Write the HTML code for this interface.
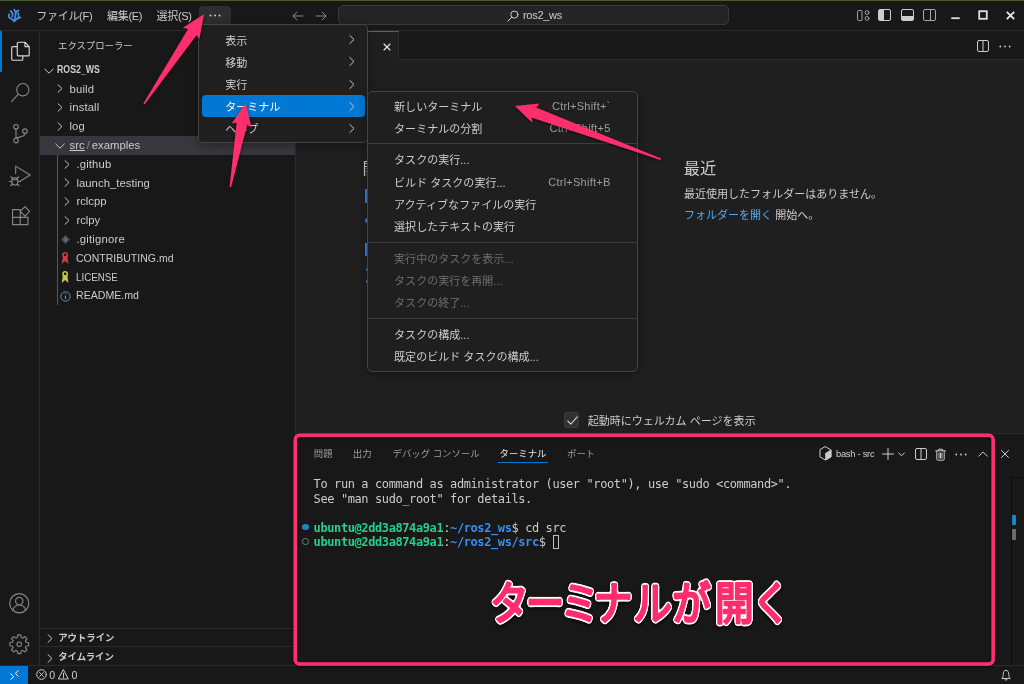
<!DOCTYPE html>
<html lang="ja">
<head>
<meta charset="utf-8">
<title>ros2_ws</title>
<style>
*{box-sizing:border-box;margin:0;padding:0}
html,body{width:1024px;height:684px;overflow:hidden;background:#181818}
body{position:relative;font-family:"Liberation Sans","Noto Sans CJK JP",sans-serif;font-size:11px;color:#cccccc;-webkit-font-smoothing:antialiased}
.abs{position:absolute}
#topline{left:0;top:0;width:1024px;height:1.200px;background:#4b5a2a}
#titlebar{left:0;top:1px;width:1024px;height:30px;background:#181818;border-bottom:1px solid #2b2b2b}
#activity{left:0;top:31px;width:40px;height:635px;background:#181818;border-right:1px solid #2b2b2b}
#sidebar{left:40px;top:31px;width:256px;height:635px;background:#181818;border-right:1px solid #2b2b2b}
#tabs{left:296px;top:31px;width:728px;height:29px;background:#181818;border-bottom:1px solid #2b2b2b}
#editor{left:296px;top:60px;width:728px;height:374px;background:#1f1f1f}
#panel{left:296px;top:433px;width:728px;height:233px;background:#181818;border-top:1px solid #2b2b2b}
#status{left:0;top:665px;width:1024px;height:19px;background:#181818;border-top:1px solid #2b2b2b}
.menu{background:#1f1f1f;border:1px solid #454545;border-radius:5px;box-shadow:0 2px 8px rgba(0,0,0,.36)}
.t{position:absolute;white-space:nowrap;line-height:1}

.mi{position:absolute;top:.8px;height:29px;line-height:29px;font-size:11px;letter-spacing:-.3px;color:#cccccc;white-space:nowrap}
svg{position:absolute;overflow:visible}
.ic{fill:none;stroke:#cccccc;stroke-width:1;stroke-linecap:round;stroke-linejoin:round}

.ai{fill:none;stroke:#868686;stroke-width:1.35;stroke-linecap:round;stroke-linejoin:round}
.row{position:absolute;left:0;width:255px;height:18.800px;line-height:18.800px;font-size:11.300px;color:#cccccc;white-space:nowrap}
.row span.l{position:absolute;top:0}
.chev{fill:none;stroke:#c5c5c5;stroke-width:1;stroke-linecap:round;stroke-linejoin:round}

.cj{font-family:"Liberation Sans","Noto Sans CJK JP",sans-serif}
.ptab{position:absolute;top:13.500px;font-size:9.400px;line-height:12px;color:#9d9d9d;white-space:nowrap}
.term{position:absolute;left:17.600px;font-family:"DejaVu Sans Mono","Liberation Mono",monospace;font-size:11.950px;line-height:14.500px;white-space:pre;color:#cccccc;letter-spacing:-.364px}
.term b{font-weight:bold}

.mrow{position:absolute;left:0;height:22.100px;line-height:22.100px;font-size:11.040px;color:#cccccc;white-space:nowrap}
.mrow .lab{position:absolute;left:25.800px;top:.7px}
.mrow .key{position:absolute;right:25.800px;top:0;color:#9d9d9d;font-size:11.040px;letter-spacing:.23px}
.msep{position:absolute;left:0;height:1px;background:#3c3c3c}
.dis{color:#6d6d6d !important}
</style>
</head>
<body><div id="wrap" style="position:absolute;left:0;top:0;width:1024px;height:684px;will-change:transform">
<div id="topline" class="abs"></div>
<div id="titlebar" class="abs">
<svg style="left:7px;top:7px" width="15" height="15" viewBox="0 0 15 15"><g fill="none" stroke="#4a90e2" stroke-width="1.7" stroke-linecap="round" stroke-linejoin="round"><path d="M2.2 6.2c-1 1.6-.4 3.6 1.6 4.4 1.4.6 2.6 1 3.4 2.8"/><path d="M3.6 3c1.6 1.2 2.6 3.2 1.6 5.6"/><path d="M7.2 1.6c1.4 1.4 1.8 3 1.4 5.2-.4 2.2-.8 3.600-1.400 6.400"/><path d="M11.600 2.400c-1.600.4-2.400 1.400-2.800 2.600"/><path d="M11.200 5.200c.6 1.600.6 3 .2 4.400"/><path d="M13.400 9.400c-2.200.4-4.200 1.400-6.200 3.800"/></g></svg>
<div class="mi" style="left:36.300px">ファイル(F)</div>
<div class="mi" style="left:107px">編集(E)</div>
<div class="mi" style="left:156.500px">選択(S)</div>
<div class="abs" style="left:199px;top:5px;width:32px;height:19px;border-radius:4px;background:#2d2e2e"></div>
<svg style="left:209px;top:13px" width="12" height="3" viewBox="0 0 12 3"><circle cx="1.500" cy="1.500" r="1" fill="#cccccc"/><circle cx="6" cy="1.500" r="1" fill="#cccccc"/><circle cx="10.500" cy="1.500" r="1" fill="#cccccc"/></svg>
<svg style="left:292px;top:10px" width="12" height="10" viewBox="0 0 12 10"><path class="ic" stroke="#8a8a8a" style="stroke:#8a8a8a" d="M11 5H1M5 1L1 5l4 4"/></svg>
<svg style="left:315px;top:10px" width="12" height="10" viewBox="0 0 12 10"><path class="ic" style="stroke:#8a8a8a" d="M1 5h10M7 1l4 4-4 4"/></svg>
<div class="abs" style="left:338px;top:4px;width:391px;height:20px;border-radius:5px;background:#242424;border:1px solid #3a3a3a"></div>
<svg style="left:507px;top:9px" width="12" height="12" viewBox="0 0 12 12"><circle class="ic" cx="7.400" cy="4.600" r="3.600"/><path class="ic" d="M4.800 7.200L.8 11.200"/></svg>
<div class="mi" style="left:523px;top:0">ros2_ws</div>
<!-- layout icons -->
<svg style="left:857px;top:9px" width="13" height="11" viewBox="0 0 13 11"><rect class="ic" style="stroke:#a0a0a0" x=".5" y=".5" width="4.500" height="10" rx="1"/><circle class="ic" style="stroke:#a0a0a0" cx="10" cy="2.600" r="1.900"/><circle class="ic" style="stroke:#a0a0a0" cx="10" cy="8.400" r="1.900"/></svg>
<svg style="left:878px;top:8px" width="13" height="12" viewBox="0 0 13 12"><rect class="ic" x=".5" y=".5" width="12" height="11" rx="1.500"/><path d="M1 1h5v10H1z" fill="#cccccc"/></svg>
<svg style="left:901px;top:8px" width="13" height="12" viewBox="0 0 13 12"><rect class="ic" x=".5" y=".5" width="12" height="11" rx="1.500"/><path d="M1 7h11v4H1z" fill="#cccccc"/></svg>
<svg style="left:923px;top:8px" width="13" height="12" viewBox="0 0 13 12"><rect class="ic" style="stroke:#a8a8a8" x=".5" y=".5" width="12" height="11" rx="1.500"/><path class="ic" style="stroke:#a8a8a8" d="M7.500 .5v11"/></svg>
<svg style="left:951px;top:16px" width="9" height="3" viewBox="0 0 9 3"><path d="M.3 1.200h8.400" stroke="#e0e0e0" stroke-width="1.800" fill="none"/></svg>
<svg style="left:978px;top:9px" width="10" height="10" viewBox="0 0 10 10"><rect x="1.200" y="1.200" width="7.600" height="7.600" stroke="#e0e0e0" stroke-width="1.800" fill="none"/></svg>
<svg style="left:1006px;top:10px" width="9" height="9" viewBox="0 0 9 9"><path d="M.8 .8l7.400 7.400M8.200 .8L.8 8.200" stroke="#e8e8e8" stroke-width="1.800" fill="none"/></svg>
</div>
<div id="activity" class="abs">
<div class="abs" style="left:0;top:0;width:1.500px;height:41px;background:#0078d4"></div>
<!-- files -->
<svg style="left:9.500px;top:9.700px" width="20.500" height="20.500" viewBox="0 0 24 24"><path class="ai" style="stroke:#d7d7d7" d="M17.500 1.500H10a1.500 1.500 0 0 0-1.500 1.500v13a1.500 1.500 0 0 0 1.500 1.500h11a1.500 1.500 0 0 0 1.500-1.500V6.500zM17.500 1.500v5h5M8.500 6.500H3.500A1.500 1.500 0 0 0 2 8v13a1.500 1.500 0 0 0 1.500 1.500h10A1.500 1.500 0 0 0 15 21v-3.500"/></svg>
<!-- search -->
<svg style="left:9.500px;top:51px" width="20.500" height="20.500" viewBox="0 0 24 24"><circle class="ai" cx="15" cy="9" r="7.200"/><path class="ai" d="M9.800 14.200L1.800 23"/></svg>
<!-- scm -->
<svg style="left:9.500px;top:92px" width="20.500" height="20.500" viewBox="0 0 24 24"><circle class="ai" cx="7" cy="4.500" r="2.700"/><circle class="ai" cx="7" cy="20.500" r="2.700"/><circle class="ai" cx="17.500" cy="9.500" r="2.700"/><path class="ai" d="M7 7.200v10.600M17.500 12.200c0 4-5 3.300-10.500 5.600"/></svg>
<!-- debug -->
<svg style="left:8px;top:133px" width="23" height="23" viewBox="0 0 27 27"><path class="ai" d="M9 11V2.500l17 10.500-11.500 7"/><ellipse class="ai" cx="8" cy="20.500" rx="3.600" ry="4.200"/><path class="ai" d="M5.500 17l-2-2M10.500 17l2-2M4.400 20.500H1.500M11.600 20.500h3M5.200 23.500l-2.200 2M10.800 23.500l2.200 2M5 18.500h6"/></svg>
<!-- extensions -->
<svg style="left:9.500px;top:174px" width="20.500" height="20.500" viewBox="0 0 24 24"><path class="ai" d="M3 5.500h9v9H3zM3 14.500h9v8.500H3zM12 14.500h9V23h-9zM17.500 2l5.500 5.500-5.500 5.500-5.500-5.500z"/></svg>
<!-- account -->
<svg style="left:9.200px;top:561.800px" width="20.500" height="20.500" viewBox="0 0 24 24"><circle class="ai" cx="12" cy="12" r="11.200"/><circle class="ai" cx="12" cy="9.500" r="4.300"/><path class="ai" d="M4.500 20c1-4 4-6 7.500-6s6.500 2 7.500 6"/></svg>
<!-- gear -->
<svg style="left:9.200px;top:602.800px" width="20.500" height="20.500" viewBox="0 0 24 24"><circle class="ai" cx="12" cy="12" r="2.600"/><path class="ai" d="M10.300 1h3.400l.6 3.100 1.700.7 2.600-1.800 2.400 2.400-1.800 2.600.7 1.700 3.100.6v3.400l-3.100.6-.7 1.700 1.800 2.600-2.400 2.400-2.600-1.800-1.700.7-.6 3.100h-3.400l-.6-3.100-1.700-.7-2.600 1.800-2.400-2.400 1.800-2.600-.7-1.700L1 13.700v-3.400l3.100-.6.700-1.700L3 5.400 5.400 3 8 4.800l1.700-.7z"/></svg>
</div>
<div id="sidebar" class="abs">
<div class="t" style="left:18px;top:9.500px;font-size:9.400px;color:#cccccc">エクスプローラー</div>
<div class="row" style="top:29.75px;font-weight:bold;font-size:10.400px"><svg style="left:4.300px;top:7px" width="10" height="6" viewBox="0 0 10 6"><path class="chev" d="M.7 1l4.300 4.200L9.300 1"/></svg><span class="l" style="left:17.400px;transform:scaleX(.845);transform-origin:0 50%">ROS2_WS</span></div>
<div class="row" style="top:48.55px"><svg style="left:17.100px;top:4.800px" width="6" height="9" viewBox="0 0 6 9"><path class="chev" d="M1 .7l4 3.800-4 3.800"/></svg><span class="l" style="left:29.600px;letter-spacing:.14px">build</span></div>
<div class="row" style="top:67.35px"><svg style="left:17.100px;top:4.800px" width="6" height="9" viewBox="0 0 6 9"><path class="chev" d="M1 .7l4 3.800-4 3.800"/></svg><span class="l" style="left:29.600px;letter-spacing:.13px">install</span></div>
<div class="row" style="top:86.15px"><svg style="left:17.100px;top:4.800px" width="6" height="9" viewBox="0 0 6 9"><path class="chev" d="M1 .7l4 3.800-4 3.800"/></svg><span class="l" style="left:29.600px">log</span></div>
<div class="row" style="top:104.95px;background:#37373d;width:255px"><svg style="left:15px;top:7px" width="10" height="6" viewBox="0 0 10 6"><path class="chev" d="M.7 1l4.300 4.200L9.300 1"/></svg><span class="l" style="left:29.600px"><span style="text-decoration:underline">src</span><span style="color:#8f8f8f;padding:0 2px">/</span>examples</span></div>
<div class="abs" style="left:17.400px;top:123.75px;width:1px;height:150.4px;background:#585858"></div>
<div class="row" style="top:123.75px"><svg style="left:23.600px;top:4.800px" width="6" height="9" viewBox="0 0 6 9"><path class="chev" d="M1 .7l4 3.800-4 3.800"/></svg><span class="l" style="left:36.400px;letter-spacing:.16px">.github</span></div>
<div class="row" style="top:142.55px"><svg style="left:23.600px;top:4.800px" width="6" height="9" viewBox="0 0 6 9"><path class="chev" d="M1 .7l4 3.800-4 3.800"/></svg><span class="l" style="left:36.400px;letter-spacing:.05px">launch_testing</span></div>
<div class="row" style="top:161.35px"><svg style="left:23.600px;top:4.800px" width="6" height="9" viewBox="0 0 6 9"><path class="chev" d="M1 .7l4 3.800-4 3.800"/></svg><span class="l" style="left:36.400px">rclcpp</span></div>
<div class="row" style="top:180.15px"><svg style="left:23.600px;top:4.800px" width="6" height="9" viewBox="0 0 6 9"><path class="chev" d="M1 .7l4 3.800-4 3.800"/></svg><span class="l" style="left:36.400px">rclpy</span></div>
<div class="row" style="top:198.95px"><svg style="left:20.500px;top:4.900px" width="9" height="9" viewBox="0 0 9 9"><path d="M4.500 0L9 4.500 4.500 9 0 4.500z" fill="#41535b"/><path d="M3.200 2.600l2.600 2.600M4.500 3.900v2.600" stroke="#7d949d" stroke-width=".9" fill="none"/></svg><span class="l" style="left:36.400px;letter-spacing:.2px">.gitignore</span></div>
<div class="row" style="top:217.75px"><svg style="left:20.900px;top:3.300px" width="8.200" height="12.600" viewBox="0 0 7 11"><circle cx="3.500" cy="2.600" r="1.900" fill="none" stroke="#cc3e44" stroke-width="1.400"/><path d="M1.600 3.800L.6 10.500 3.500 7.800l2.900 2.700L5.400 3.800z" fill="#cc3e44"/></svg><span class="l" style="left:36.400px;transform:scaleX(.93);transform-origin:0 50%">CONTRIBUTING.md</span></div>
<div class="row" style="top:236.55px"><svg style="left:20.900px;top:3.300px" width="8.200" height="12.600" viewBox="0 0 7 11"><circle cx="3.500" cy="2.600" r="1.900" fill="none" stroke="#cbcb41" stroke-width="1.400"/><path d="M1.600 3.800L.6 10.500 3.500 7.800l2.900 2.700L5.400 3.800z" fill="#cbcb41"/></svg><span class="l" style="left:36.400px;transform:scaleX(.865);transform-origin:0 50%">LICENSE</span></div>
<div class="row" style="top:255.35px"><svg style="left:19.800px;top:4.200px" width="11" height="11" viewBox="0 0 11 11"><circle cx="5.500" cy="5.500" r="4.700" fill="none" stroke="#519aba" stroke-width="1"/><path d="M5.500 4.800v3.200" stroke="#519aba" stroke-width="1.200" fill="none"/><circle cx="5.500" cy="3.100" r=".7" fill="#519aba"/></svg><span class="l" style="left:36.400px;transform:scaleX(.9375);transform-origin:0 50%">README.md</span></div>
<div class="abs" style="left:0;top:597px;width:255px;height:1px;background:#2b2b2b"></div>
<div class="row" style="top:597.800px;font-weight:bold;font-size:9.400px"><svg style="left:6.5px;top:5.400px" width="6" height="9" viewBox="0 0 6 9"><path class="chev" d="M1 .7l4 3.800-4 3.800"/></svg><span class="l" style="left:18.200px">アウトライン</span></div>
<div class="abs" style="left:0;top:615.300px;width:255px;height:1px;background:#2b2b2b"></div>
<div class="row" style="top:617.300px;font-weight:bold;font-size:9.400px"><svg style="left:6.5px;top:5.400px" width="6" height="9" viewBox="0 0 6 9"><path class="chev" d="M1 .7l4 3.800-4 3.800"/></svg><span class="l" style="left:18.200px">タイムライン</span></div>
</div>
<div id="tabs" class="abs">
<div class="abs" style="left:0;top:0;width:103px;height:30px;background:#1f1f1f;border-top:1.500px solid #0078d4;border-right:1px solid #2b2b2b"></div>
<svg style="left:86.500px;top:11.500px" width="8" height="8" viewBox="0 0 8 8"><path d="M.7 .7l6.600 6.600M7.300 .7L.7 7.300" stroke="#e0e0e0" stroke-width="1.300" fill="none"/></svg>
<svg style="left:681px;top:9px" width="12" height="12" viewBox="0 0 12 12"><rect class="ic" x=".5" y=".5" width="11" height="11" rx="1.500"/><path class="ic" d="M6 .5v11"/></svg>
<svg style="left:703px;top:14px" width="12" height="3" viewBox="0 0 12 3"><circle cx="1.300" cy="1.500" r=".9" fill="#cccccc"/><circle cx="6" cy="1.500" r=".9" fill="#cccccc"/><circle cx="10.700" cy="1.500" r=".9" fill="#cccccc"/></svg>
</div>
<div id="editor" class="abs">
<div class="t" style="left:387.800px;top:100px;font-size:16.200px;color:#cccccc">最近</div>
<div class="t" style="left:387.900px;top:129.300px;font-size:11.040px;color:#cccccc">最近使用したフォルダーはありません。</div>
<div class="t" style="left:387.900px;top:150.200px;font-size:11.040px;color:#cccccc"><span style="color:#4daafc">フォルダーを開く</span> 開始へ。</div>
<div class="abs" style="left:268px;top:352.400px;width:15.400px;height:15.400px;border-radius:3px;background:#313131;border:1px solid #3c3c3c"></div>
<svg style="left:270.500px;top:355.500px" width="11" height="9" viewBox="0 0 11 9"><path class="ic" style="stroke-width:1.100" d="M.8 5l3 3.200L10.200 .8"/></svg>
<div class="t" style="left:291.700px;top:355.700px;font-size:11.040px;color:#cccccc">起動時にウェルカム ページを表示</div>
<!-- slivers of welcome page content visible left of the submenu -->
<div class="t" style="left:66.500px;top:100px;font-size:16.200px;color:#cccccc">開始</div>
<div class="abs" style="left:69.300px;top:128.500px;width:2.200px;height:14.500px;background:#3b82d6"></div>
<div class="abs" style="left:69.300px;top:157.700px;width:2.200px;height:5.300px;border-radius:2px 0 0 2px;background:#3b82d6"></div>
<div class="abs" style="left:69.300px;top:182.500px;width:2.200px;height:13.200px;background:#3b82d6"></div>
<div class="abs" style="left:69.500px;top:208.300px;width:2px;height:3px;border-radius:1.500px;background:#3b82d6"></div>
<div class="abs" style="left:69.500px;top:220px;width:2px;height:3px;border-radius:1.500px;background:#3b82d6"></div>
</div>
<div id="panel" class="abs">
<div class="ptab" style="left:17.800px">問題</div>
<div class="ptab" style="left:56.800px">出力</div>
<div class="ptab" style="left:96.600px">デバッグ コンソール</div>
<div class="ptab" style="left:203.500px;color:#e7e7e7">ターミナル</div>
<div class="abs" style="left:201.700px;top:28.300px;width:50.300px;height:1px;background:#0078d4"></div>
<div class="ptab" style="left:271px">ポート</div>
<div class="term" style="top:43.400px">To run a command as administrator (user "root"), use "sudo &lt;command&gt;".
See "man sudo_root" for details.

<b style="color:#23d18b">ubuntu@2dd3a874a9a1</b>:<b style="color:#3b8eea">~/ros2_ws</b>$ cd src
<b style="color:#23d18b">ubuntu@2dd3a874a9a1</b>:<b style="color:#3b8eea">~/ros2_ws/src</b>$ </div>
<div class="abs" style="left:6.100px;top:89.500px;width:6.800px;height:6.800px;border-radius:3.400px;background:#1a85c4"></div>
<div class="abs" style="left:6.300px;top:104.200px;width:6.400px;height:6.400px;border-radius:3.200px;border:1.200px solid #7a7a7a"></div>
<div class="abs" style="left:256.500px;top:100.600px;width:6.900px;height:14px;border:1px solid #c0c0c0"></div>
<!-- panel toolbar -->
<svg style="left:522.500px;top:12.1px" width="13" height="15" viewBox="0 0 13 15"><path class="ic" d="M6.500 .8l5.500 3.100v7l-5.500 3.100L1 10.900v-7z"/><path d="M6.500 7.200L12 3.900v7l-5.500 3.100z" fill="#cccccc" stroke="#cccccc" stroke-width=".6" stroke-linejoin="round"/></svg>
<div class="t" style="left:540px;top:14.7px;font-size:9.400px;letter-spacing:-.28px;color:#cccccc">bash - src</div>
<svg style="left:586px;top:13.9px" width="12" height="12" viewBox="0 0 12 12"><path class="ic" d="M6 .5v11M.5 6h11"/></svg>
<svg style="left:601.500px;top:18.4px" width="7" height="5" viewBox="0 0 7 5"><path class="ic" d="M.6 .8l2.900 3 2.900-3"/></svg>
<svg style="left:618.600px;top:14.4px" width="12" height="12" viewBox="0 0 12 12"><rect class="ic" x=".5" y=".5" width="11" height="11" rx="1.500"/><path class="ic" d="M6 .5v11"/></svg>
<svg style="left:639px;top:13.9px" width="11" height="13" viewBox="0 0 11 13"><path class="ic" d="M.6 2.800h9.800M3.600 2.600V1.200h3.800v1.400M1.800 3v8.300c0 .5.400.9.900.9h5.600c.5 0 .9-.4.900-.9V3M4 5v5.200M5.500 5v5.200M7 5v5.200"/></svg>
<svg style="left:659px;top:18.9px" width="12" height="3" viewBox="0 0 12 3"><circle cx="1.300" cy="1.500" r=".9" fill="#cccccc"/><circle cx="6" cy="1.500" r=".9" fill="#cccccc"/><circle cx="10.700" cy="1.500" r=".9" fill="#cccccc"/></svg>
<svg style="left:681.500px;top:16.9px" width="10" height="6" viewBox="0 0 10 6"><path class="ic" d="M.7 5.200L5 .9l4.300 4.300"/></svg>
<svg style="left:704.800px;top:15.9px" width="8" height="8" viewBox="0 0 8 8"><path class="ic" d="M.5 .5l7 7M7.500 .5l-7 7"/></svg>
<!-- overview ruler -->
<div class="abs" style="left:715.200px;top:42.500px;width:13px;height:190px;border-left:1px solid #0c0c0c;border-top:1px solid #0c0c0c"></div>
<div class="abs" style="left:716.400px;top:80.700px;width:3.200px;height:10.200px;background:#1a85c4"></div>
<div class="abs" style="left:716.400px;top:95.200px;width:3.200px;height:10.500px;background:#6b6b6b"></div>
</div>
<div id="status" class="abs">
<div class="abs" style="left:0;top:0;width:28.200px;height:18px;background:#0078d4"></div>
<svg style="left:9.500px;top:4px" width="9" height="10" viewBox="0 0 9 10"><path d="M.8 3.800l2.800 2.800L.8 9.400M8.200 .6L5.400 3.400l2.800 2.800" stroke="#ffffff" stroke-width="1" fill="none" stroke-linecap="round" stroke-linejoin="round"/></svg>
<svg style="left:35.700px;top:3.400px" width="11" height="11" viewBox="0 0 11 11"><circle class="ic" cx="5.500" cy="5.500" r="4.800"/><path class="ic" d="M3.600 3.600l3.800 3.800M7.400 3.600L3.600 7.400"/></svg>
<div class="t" style="left:49.300px;top:3.500px;font-size:10.600px;color:#cccccc">0</div>
<svg style="left:58px;top:3.400px" width="11" height="11" viewBox="0 0 11 11"><path class="ic" d="M5.500 .9L10.300 10H.7z"/><path class="ic" d="M5.500 4.200v3.300M5.500 8.500v.2"/></svg>
<div class="t" style="left:71.500px;top:3.500px;font-size:10.600px;color:#cccccc">0</div>
<svg style="left:1000.500px;top:3px" width="10" height="12" viewBox="0 0 10 12"><path class="ic" d="M1 9.200c.9-.8 1.200-1.600 1.200-3.700C2.200 3 3.300 1.300 5 1.300S7.800 3 7.800 5.500c0 2.100.3 2.900 1.200 3.700zM3.900 10.300c.2.600.6.900 1.100.9s.9-.3 1.100-.9"/></svg>
</div>
<div id="menu1" class="abs menu" style="left:198.400px;top:24.200px;width:169.800px;height:119.300px">
<div class="abs" style="left:3px;top:69.500px;width:162.400px;height:22.200px;border-radius:4px;background:#0078d4"></div>
<div class="mrow" style="top:3.7px;width:168px;color:#cccccc"><span class="lab">表示</span><svg style="left:149.500px;top:6.5px" width="6" height="9" viewBox="0 0 6 9"><path class="chev" d="M.8 .5l4.200 4-4.200 4"/></svg></div>
<div class="mrow" style="top:25.8px;width:168px;color:#cccccc"><span class="lab">移動</span><svg style="left:149.500px;top:6.5px" width="6" height="9" viewBox="0 0 6 9"><path class="chev" d="M.8 .5l4.200 4-4.200 4"/></svg></div>
<div class="mrow" style="top:47.9px;width:168px;color:#cccccc"><span class="lab">実行</span><svg style="left:149.500px;top:6.5px" width="6" height="9" viewBox="0 0 6 9"><path class="chev" d="M.8 .5l4.200 4-4.200 4"/></svg></div>
<div class="mrow" style="top:70.0px;width:168px;color:#ffffff"><span class="lab">ターミナル</span><svg style="left:149.500px;top:6.5px" width="6" height="9" viewBox="0 0 6 9"><path class="chev" d="M.8 .5l4.200 4-4.200 4"/></svg></div>
<div class="mrow" style="top:92.1px;width:168px;color:#cccccc"><span class="lab">ヘルプ</span><svg style="left:149.500px;top:6.5px" width="6" height="9" viewBox="0 0 6 9"><path class="chev" d="M.8 .5l4.200 4-4.200 4"/></svg></div>
</div>
<div id="menu2" class="abs menu" style="left:367.300px;top:90.900px;width:270.300px;height:281.300px">
<div class="mrow" style="top:3.45px;width:268px"><span class="lab">新しいターミナル</span><span class="key">Ctrl+Shift+`</span></div>
<div class="mrow" style="top:25.45px;width:268px"><span class="lab">ターミナルの分割</span><span class="key">Ctrl+Shift+5</span></div>
<div class="mrow" style="top:56.75px;width:268px"><span class="lab">タスクの実行...</span></div>
<div class="mrow" style="top:78.95px;width:268px"><span class="lab">ビルド タスクの実行...</span><span class="key">Ctrl+Shift+B</span></div>
<div class="mrow" style="top:101.05px;width:268px"><span class="lab">アクティブなファイルの実行</span></div>
<div class="mrow" style="top:123.05px;width:268px"><span class="lab">選択したテキストの実行</span></div>
<div class="mrow dis" style="top:155.35px;width:268px"><span class="lab">実行中のタスクを表示...</span></div>
<div class="mrow dis" style="top:177.65px;width:268px"><span class="lab">タスクの実行を再開...</span></div>
<div class="mrow dis" style="top:199.65px;width:268px"><span class="lab">タスクの終了...</span></div>
<div class="mrow" style="top:231.25px;width:268px"><span class="lab">タスクの構成...</span></div>
<div class="mrow" style="top:253.35px;width:268px"><span class="lab">既定のビルド タスクの構成...</span></div>
<div class="msep" style="top:51.5px;width:268.300px"></div>
<div class="msep" style="top:150.3px;width:268.300px"></div>
<div class="msep" style="top:226.1px;width:268.300px"></div>
</div>
<!-- annotations -->
<svg id="anno" style="left:0;top:0" width="1024" height="684" viewBox="0 0 1024 684">
<defs><filter id="sh" x="-20%" y="-20%" width="140%" height="140%"><feDropShadow dx="0" dy="1.500" stdDeviation="1.800" flood-color="#000" flood-opacity=".55"/></filter><filter id="ol" x="-5%" y="-20%" width="110%" height="140%" color-interpolation-filters="sRGB"><feGaussianBlur in="SourceAlpha" stdDeviation="1.500" result="b"/><feComponentTransfer in="b" result="d"><feFuncA type="linear" slope="10" intercept="-.6"/></feComponentTransfer><feFlood flood-color="#ffffff"/><feComposite in2="d" operator="in" result="w"/><feGaussianBlur in="d" stdDeviation="1.800" result="sb"/><feOffset in="sb" dx="0" dy="1.500" result="so"/><feComponentTransfer in="so" result="s"><feFuncR type="linear" slope="0"/><feFuncG type="linear" slope="0"/><feFuncB type="linear" slope="0"/><feFuncA type="linear" slope=".6"/></feComponentTransfer><feMerge><feMergeNode in="s"/><feMergeNode in="w"/><feMergeNode in="SourceGraphic"/></feMerge></filter></defs>
<rect x="295.250" y="435.150" width="697.900" height="228.900" rx="4.500" ry="4.500" fill="none" stroke="#ff2d6d" stroke-width="3.500" filter="url(#sh)"/>
<g fill="#ff2d6d" filter="url(#sh)">
<path d="M203.900 14.200L182.800 27.700L188.100 29L143.400 103.400L144.600 104.200L196.600 34.900L199.300 38.900Z"/>
<path d="M245.600 103.200L231.800 123.600L236.700 122.600L229.600 187L231 187.200L247.200 124.600L251.500 127.200Z"/>
<path d="M514.900 106.100L539.600 103.500L536 107.500L661.050 158.500L660.550 159.900L531.600 117.500L532.500 122.800Z"/>
</g>
<text transform="scale(0.85,1)" x="599.3 641.2 682.1 721.2 767.8 813.6 864.0 907.4" y="620.500" text-anchor="middle" font-family="'Liberation Sans','Noto Sans CJK JP',sans-serif" font-weight="400" font-size="45.500" fill="#ff2d6d" stroke="#ff2d6d" stroke-width="2.600" stroke-linejoin="round" stroke-linecap="round" filter="url(#ol)">ターミナルが開く</text>
</svg>
</div></body>
</html>
